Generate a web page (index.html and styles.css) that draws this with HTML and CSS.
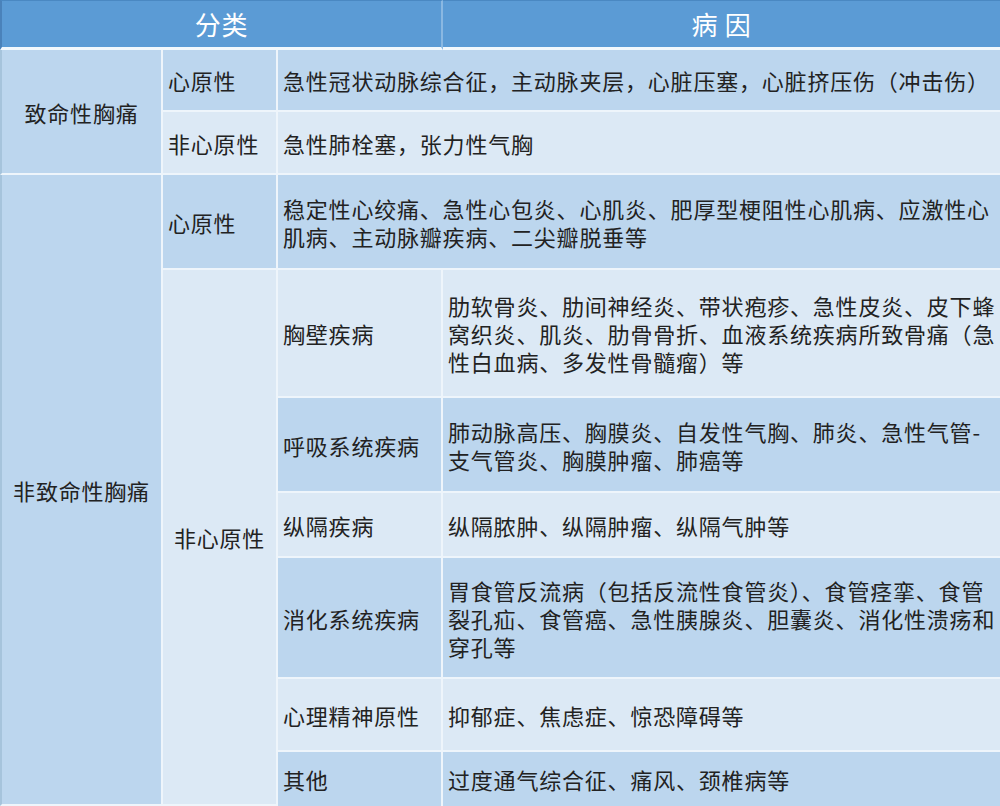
FILE: index.html
```html
<!DOCTYPE html>
<html lang="zh-CN">
<head>
<meta charset="utf-8">
<link rel="stylesheet" href="styles.css">
</head>
<body>
<table class="chart">
  <colgroup>
    <col class="c1"><col class="c2"><col class="c3"><col class="c4">
  </colgroup>
  <thead>
    <tr class="h-head">
      <th class="head first" colspan="3">分类</th>
      <th class="head">病&nbsp;因</th>
    </tr>
  </thead>
  <tbody>
    <tr class="h1">
      <td class="dark first center" rowspan="2">致命性胸痛</td>
      <td class="dark">心原性</td>
      <td class="dark" colspan="2">急性冠状动脉综合征，主动脉夹层，心脏压塞，心脏挤压伤（冲击伤）</td>
    </tr>
    <tr class="h2">
      <td class="light">非心原性</td>
      <td class="light" colspan="2">急性肺栓塞，张力性气胸</td>
    </tr>
    <tr class="h3">
      <td class="dark first center" rowspan="7">非致命性胸痛</td>
      <td class="dark">心原性</td>
      <td class="dark" colspan="2"><span class="ln">稳定性心绞痛、急性心包炎、心肌炎、肥厚型梗阻性心肌病、应激性心</span><span class="ln">肌病、主动脉瓣疾病、二尖瓣脱垂等</span></td>
    </tr>
    <tr class="h4">
      <td class="light center" rowspan="6">非心原性</td>
      <td class="light">胸壁疾病</td>
      <td class="light"><span class="ln">肋软骨炎、肋间神经炎、带状疱疹、急性皮炎、皮下蜂</span><span class="ln">窝织炎、肌炎、肋骨骨折、血液系统疾病所致骨痛（急</span><span class="ln">性白血病、多发性骨髓瘤）等</span></td>
    </tr>
    <tr class="h5">
      <td class="dark">呼吸系统疾病</td>
      <td class="dark"><span class="ln">肺动脉高压、胸膜炎、自发性气胸、肺炎、急性气管-</span><span class="ln">支气管炎、胸膜肿瘤、肺癌等</span></td>
    </tr>
    <tr class="h6">
      <td class="light">纵隔疾病</td>
      <td class="light">纵隔脓肿、纵隔肿瘤、纵隔气肿等</td>
    </tr>
    <tr class="h7">
      <td class="dark">消化系统疾病</td>
      <td class="dark"><span class="ln">胃食管反流病（包括反流性食管炎）、食管痉挛、食管</span><span class="ln">裂孔疝、食管癌、急性胰腺炎、胆囊炎、消化性溃疡和</span><span class="ln">穿孔等</span></td>
    </tr>
    <tr class="h8">
      <td class="light">心理精神原性</td>
      <td class="light">抑郁症、焦虑症、惊恐障碍等</td>
    </tr>
    <tr class="h9">
      <td class="dark">其他</td>
      <td class="dark">过度通气综合征、痛风、颈椎病等</td>
    </tr>
  </tbody>
</table>
</body>
</html>
```

FILE: styles.css
```css
html, body {
  margin: 0;
  padding: 0;
  background: #dce9f5;
}
.chart {
  width: 1000px;
  table-layout: fixed;
  border-collapse: separate;
  border-spacing: 0;
  font-family: "Noto Sans CJK SC", "Noto Sans", sans-serif;
  font-size: 22px;
  letter-spacing: 0.8px;
  line-height: 28px;
  color: #222;
}
.c1 { width: 163px; }
.c2 { width: 115px; }
.c3 { width: 165px; }
.c4 { width: 557px; }

.chart th, .chart td {
  box-sizing: border-box;
  padding: 0 0 0 5px;
  vertical-align: middle;
  text-align: left;
  white-space: nowrap;
  border-right: 2px solid #eef5fb;
  border-bottom: 2px solid #eef5fb;
  font-weight: 400;
}
.chart th:last-child, .chart td:last-child { border-right: 0; }

.ln {
  display: block;
  height: 28px;
  line-height: 28px;
}

.head {
  background: #5b9bd5;
  color: #ffffff;
  font-size: 26px;
  font-weight: 500;
  text-align: center !important;
  padding: 0 !important;
  border-top: 1px solid #4a88c2;
  border-bottom: 3px solid #f2f8fd !important;
  border-right: 2px solid #8ab8e2 !important;
}
.head:last-child { border-right: 0 !important; }
.head.first { border-left: 2px solid #4a82ba; }

.dark { background: #bcd6ee; }
.light { background: #dce9f5; }
.center { text-align: center !important; padding: 0 !important; }
.first { border-left: 2px solid #a6c4dc; }

.h-head { height: 50px; }
.h1 { height: 62px; }
.h2 { height: 63px; }
.h3 { height: 95px; }
.h4 { height: 128px; }
.h5 { height: 95px; }
.h6 { height: 65px; }
.h7 { height: 121px; }
.h8 { height: 73px; }
.h9 { height: 54px; }
.h9 td { border-bottom: 0; }
```
